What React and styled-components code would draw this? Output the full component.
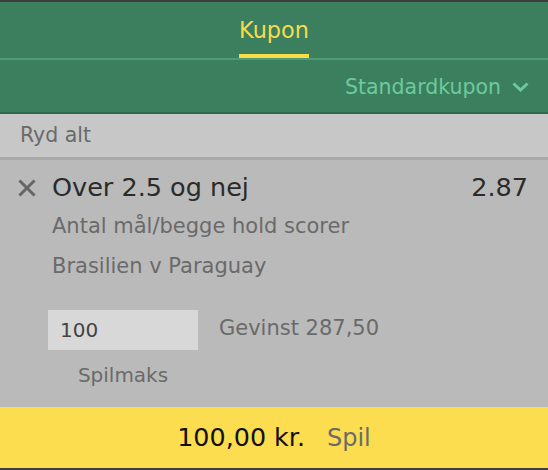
import React from 'react';
import { styled, createGlobalStyle } from 'styled-components';

const GlobalStyle = createGlobalStyle`
    html, body {
        margin: 0;
        padding: 0;
        background-color: #3d3d3d;
    }
    body {
        font-family: 'DejaVu Sans', 'Liberation Sans', sans-serif;
    }
`;

const CloseIcon = () => (
    <svg width="18" height="18" viewBox="0 0 18 18">
        <path
            d="M2.5 2.5 L15.5 15.5 M15.5 2.5 L2.5 15.5"
            stroke="#666666"
            strokeWidth="3"
            strokeLinecap="square"
            fill="none"
        />
    </svg>
);

const ChevronIcon = () => (
    <svg width="17" height="10" viewBox="0 0 17 10">
        <path
            d="M1.5 1.5 L8.5 8 L15.5 1.5"
            stroke="#6ccb9c"
            strokeWidth="3"
            fill="none"
        />
    </svg>
);

const App = () => {
    return (
        <Page>
            <GlobalStyle />
            <TabBar>
                <Tab>Kupon</Tab>
            </TabBar>
            <TypeRow>
                <TypeSelect>
                    Standardkupon
                    <ChevronIcon />
                </TypeSelect>
            </TypeRow>
            <ClearBar>Ryd alt</ClearBar>
            <BetContainer>
                <TitleRow>
                    <RemoveButton>
                        <CloseIcon />
                    </RemoveButton>
                    <Title>Over 2.5 og nej</Title>
                    <Odds>2.87</Odds>
                </TitleRow>
                <Details>
                    <Detail>Antal mål/begge hold scorer</Detail>
                    <Detail>Brasilien v Paraguay</Detail>
                </Details>
                <StakeRow>
                    <StakeColumn>
                        <StakeInput defaultValue="100" />
                        <MaxLabel>Spilmaks</MaxLabel>
                    </StakeColumn>
                    <Winnings>Gevinst 287,50</Winnings>
                </StakeRow>
            </BetContainer>
            <PlaceBar>
                <Amount>100,00 kr.</Amount>
                <PlaceLabel>Spil</PlaceLabel>
            </PlaceBar>
        </Page>
    );
};

export default App;

const Page = styled.div`
    display: flex;
    flex-direction: column;
    width: 548px;
    border-top: 2px solid #3d3d3d;
    border-bottom: 2px solid #3d3d3d;
`;

const TabBar = styled.div`
    display: flex;
    justify-content: center;
    background-color: #3c7f5f;
    border-bottom: 2px solid #4f9b76;
`;

const Tab = styled.div`
    padding: 15px 0 11px;
    font-size: 22.4px;
    line-height: 26px;
    color: #f6dc4c;
    border-bottom: 4px solid #fadc46;
`;

const TypeRow = styled.div`
    display: flex;
    justify-content: flex-end;
    background-color: #3c7f5f;
    padding: 15px 19px 13px 0;
    border-bottom: 2px solid #2f6a4e;
`;

const TypeSelect = styled.div`
    display: flex;
    align-items: center;
    gap: 11px;
    font-size: 20.5px;
    line-height: 24px;
    color: #6ccb9c;
    cursor: pointer;
`;

const ClearBar = styled.div`
    background-color: #c7c7c7;
    color: #6a6a6a;
    font-size: 20.5px;
    line-height: 43px;
    padding: 0 0 0 20px;
    border-bottom: 3px solid #a9a9a9;
`;

const BetContainer = styled.div`
    display: flex;
    flex-direction: column;
    background-color: #bababa;
    padding: 12px 20px 18px 18px;
`;

const TitleRow = styled.div`
    display: flex;
    align-items: center;
    height: 30px;
`;

const RemoveButton = styled.div`
    display: flex;
    width: 18px;
    height: 18px;
    margin: 2px 16px 0 0;
    cursor: pointer;
`;

const Title = styled.div`
    flex: 1;
    font-size: 25.5px;
    line-height: 30px;
    color: #2b2b2b;
`;

const Odds = styled.div`
    font-size: 25.5px;
    line-height: 30px;
    color: #2b2b2b;
`;

const Details = styled.div`
    display: flex;
    flex-direction: column;
    margin: 4px 0 0 34px;
`;

const Detail = styled.div`
    font-size: 21px;
    line-height: 40px;
    color: #6a6a6a;
`;

const StakeRow = styled.div`
    display: flex;
    gap: 21px;
    margin: 24px 0 0 30px;
`;

const StakeColumn = styled.div`
    display: flex;
    flex-direction: column;
    align-items: center;
    gap: 11px;
    width: 150px;
`;

const StakeInput = styled.input`
    box-sizing: border-box;
    width: 150px;
    height: 40px;
    border: none;
    outline: none;
    background-color: #d8d8d8;
    padding: 0 0 0 12px;
    font-family: 'DejaVu Sans', 'Liberation Sans', sans-serif;
    font-size: 20px;
    color: #444444;
`;

const MaxLabel = styled.div`
    font-size: 20px;
    line-height: 28px;
    color: #6a6a6a;
`;

const Winnings = styled.div`
    font-size: 21px;
    line-height: 36px;
    color: #6a6a6a;
`;

const PlaceBar = styled.div`
    display: flex;
    justify-content: center;
    align-items: baseline;
    gap: 22px;
    background-color: #fcdd50;
    height: 61px;
    line-height: 61px;
`;

const Amount = styled.div`
    font-size: 25.4px;
    color: #111111;
`;

const PlaceLabel = styled.div`
    font-size: 24px;
    color: #6b6b6b;
    cursor: pointer;
`;
